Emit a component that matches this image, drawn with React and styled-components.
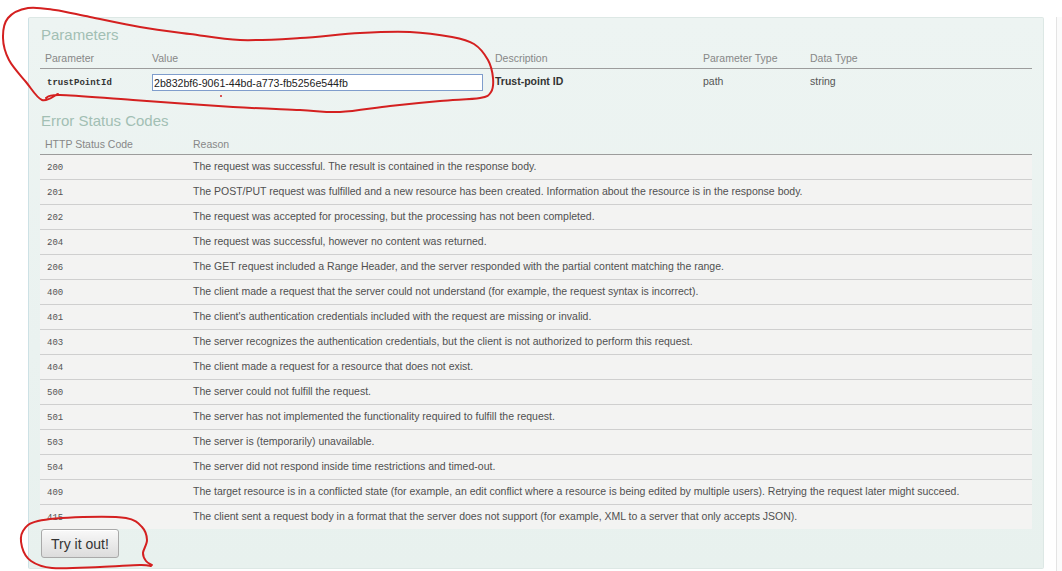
import React from "react";
import styled, { createGlobalStyle } from "styled-components";

const params = [
  { name: "trustPointId", value: "2b832bf6-9061-44bd-a773-fb5256e544fb", desc: "Trust-point ID", type: "path", dataType: "string" },
];

const codes = [
  ["200", "The request was successful. The result is contained in the response body."],
  ["201", "The POST/PUT request was fulfilled and a new resource has been created. Information about the resource is in the response body."],
  ["202", "The request was accepted for processing, but the processing has not been completed."],
  ["204", "The request was successful, however no content was returned."],
  ["206", "The GET request included a Range Header, and the server responded with the partial content matching the range."],
  ["400", "The client made a request that the server could not understand (for example, the request syntax is incorrect)."],
  ["401", "The client's authentication credentials included with the request are missing or invalid."],
  ["403", "The server recognizes the authentication credentials, but the client is not authorized to perform this request."],
  ["404", "The client made a request for a resource that does not exist."],
  ["500", "The server could not fulfill the request."],
  ["501", "The server has not implemented the functionality required to fulfill the request."],
  ["503", "The server is (temporarily) unavailable."],
  ["504", "The server did not respond inside time restrictions and timed-out."],
  ["409", "The target resource is in a conflicted state (for example, an edit conflict where a resource is being edited by multiple users). Retrying the request later might succeed."],
  ["415", "The client sent a request body in a format that the server does not support (for example, XML to a server that only accepts JSON)."],
];

// hand-drawn marker loops over the screenshot
const paramLoop = [
  [58, 94], [42, 100], [26, 82], [9, 60], [3, 38], [8, 18], [28, 8], [55, 10], [90, 17],
  [140, 27], [190, 34], [240, 40], [300, 38], [360, 33], [410, 32], [452, 37], [474, 44],
  [488, 60], [493, 78], [491, 92], [480, 98], [440, 101], [390, 106], [340, 112], [300, 110],
  [233, 107], [133, 100], [60, 95], [46, 98],
];
const buttonLoop = [
  [151, 566], [140, 565], [100, 567], [52, 568], [31, 561], [22, 547], [23, 531], [38, 521],
  [83, 517], [126, 518], [142, 527], [147, 540], [143, 553], [146, 561], [152, 565],
];

const smooth = (pts) => {
  let d = `M${pts[0][0]} ${pts[0][1]}`;
  for (let i = 0; i < pts.length - 1; i++) {
    const p0 = pts[i - 1] || pts[i];
    const p1 = pts[i];
    const p2 = pts[i + 1];
    const p3 = pts[i + 2] || p2;
    const c1 = [p1[0] + (p2[0] - p0[0]) / 6, p1[1] + (p2[1] - p0[1]) / 6];
    const c2 = [p2[0] - (p3[0] - p1[0]) / 6, p2[1] - (p3[1] - p1[1]) / 6];
    d += ` C${c1[0]} ${c1[1]} ${c2[0]} ${c2[1]} ${p2[0]} ${p2[1]}`;
  }
  return d;
};

const App = () => {
  return (
    <Page>
      <GlobalStyle />
      <Panel>
        <SectionTitle>Parameters</SectionTitle>
        <Table>
          <colgroup>
            <col style={{ width: 107 }} />
            <col style={{ width: 343 }} />
            <col style={{ width: 208 }} />
            <col style={{ width: 107 }} />
            <col />
          </colgroup>
          <thead>
            <tr>
              <HeadCell>Parameter</HeadCell>
              <HeadCell>Value</HeadCell>
              <HeadCell>Description</HeadCell>
              <HeadCell>Parameter Type</HeadCell>
              <HeadCell>Data Type</HeadCell>
            </tr>
          </thead>
          <tbody>
            {params.map((p) => (
              <tr key={p.name}>
                <ParamCell>
                  <Code bold>{p.name}</Code>
                </ParamCell>
                <ParamCell>
                  <ValueInput defaultValue={p.value} />
                </ParamCell>
                <ParamCell strong>{p.desc}</ParamCell>
                <ParamCell>{p.type}</ParamCell>
                <ParamCell>{p.dataType}</ParamCell>
              </tr>
            ))}
          </tbody>
        </Table>

        <SectionTitle spaced>Error Status Codes</SectionTitle>
        <Table>
          <colgroup>
            <col style={{ width: 148 }} />
            <col />
          </colgroup>
          <thead>
            <tr>
              <HeadCell>HTTP Status Code</HeadCell>
              <HeadCell>Reason</HeadCell>
            </tr>
          </thead>
          <tbody>
            {codes.map(([code, reason], i) => (
              <CodeRow key={code} last={i === codes.length - 1}>
                <CodeCell>
                  <Code>{code}</Code>
                </CodeCell>
                <CodeCell>{reason}</CodeCell>
              </CodeRow>
            ))}
          </tbody>
        </Table>

        <TryButton type="button">Try it out!</TryButton>
      </Panel>
      <SidePanel />

      <Marker viewBox="0 0 1062 571">
        <path d={smooth(paramLoop)} />
        <path d={smooth(buttonLoop)} />
        <circle cx="221" cy="96" r="1" fill="#d42020" stroke="none" />
      </Marker>
    </Page>
  );
};

const GlobalStyle = createGlobalStyle`
  body {
    margin: 0;
    background: #fff;
    font-family: "Liberation Sans", Arial, sans-serif;
  }
`;

const Page = styled.div`
  position: relative;
  display: flex;
  align-items: flex-start;
  height: 571px;
  padding: 17px 0 0 28px;
  box-sizing: border-box;
  overflow: hidden;
`;

const Panel = styled.div`
  width: 1016px;
  flex-shrink: 0;
  box-sizing: border-box;
  padding: 7px 11px 10px 11px;
  background: linear-gradient(180deg, #edf4f2 0%, #eaf2f0 60%, #e8f1ee 100%);
  border: 1px solid #dde8e5;
  border-left-color: #cde1e5;
  border-radius: 2px;
`;

const SidePanel = styled.div`
  flex: 1;
  height: 560px;
  margin-left: 12px;
  background: #fbfbfb;
  border-left: 1px solid #e4e4e4;
`;

const SectionTitle = styled.h4`
  margin: ${(p) => (p.spaced ? "14px" : "0")} 0 0 1px;
  font-size: 15px;
  line-height: 20px;
  font-weight: normal;
  color: #a2bfb4;
`;

const Table = styled.table`
  width: 100%;
  border-collapse: collapse;
  table-layout: fixed;
`;

const HeadCell = styled.th`
  text-align: left;
  font-weight: normal;
  font-size: 10.5px;
  line-height: 13px;
  color: #878787;
  padding: 7px 5px 3px;
  border-bottom: 1px solid #9c9c9c;
`;

const ParamCell = styled.td`
  vertical-align: top;
  padding: 5px 5px 6px;
  font-size: 10.5px;
  line-height: 15px;
  color: ${(p) => (p.strong ? "#333" : "#555")};
  font-weight: ${(p) => (p.strong ? "bold" : "normal")};
`;

const Code = styled.span`
  font-family: "Liberation Mono", "DejaVu Sans Mono", monospace;
  font-size: 9px;
  line-height: 1;
  font-weight: ${(p) => (p.bold ? "bold" : "normal")};
  color: ${(p) => (p.bold ? "#333" : "#555")};
  padding-left: 2px;
`;

const ValueInput = styled.input`
  display: block;
  width: 331px;
  height: 17px;
  margin: 0;
  padding: 0 1px;
  box-sizing: border-box;
  border: 1px solid #7f9dcc;
  background: #fff;
  font-family: "Liberation Sans", Arial, sans-serif;
  font-size: 10.6px;
  color: #222;
  outline: none;
`;

const CodeRow = styled.tr`
  background: #f3f3f2;
  border-bottom: ${(p) => (p.last ? "none" : "1px solid #cfcfcf")};
`;

const CodeCell = styled.td`
  height: 13px;
  padding: 5px 5px 6px;
  font-size: 10.5px;
  line-height: 13px;
  color: #505050;
  white-space: nowrap;
`;

const TryButton = styled.button`
  display: block;
  height: 29px;
  margin: 0 0 0 1px;
  padding: 0 9px;
  font-family: "Liberation Sans", Arial, sans-serif;
  font-size: 14px;
  color: #333;
  background: linear-gradient(180deg, #f9f9f9 0%, #e9e9e9 55%, #dcdcdc 100%);
  border: 1px solid #a9a9a9;
  border-radius: 3px;
  box-shadow: inset 0 1px 0 #fff;
  cursor: pointer;
`;

const Marker = styled.svg`
  position: absolute;
  left: 0;
  top: 0;
  width: 1062px;
  height: 571px;
  pointer-events: none;
  fill: none;
  stroke: #d42020;
  stroke-width: 2;
  stroke-linecap: round;
  stroke-linejoin: round;
`;

export default App;
